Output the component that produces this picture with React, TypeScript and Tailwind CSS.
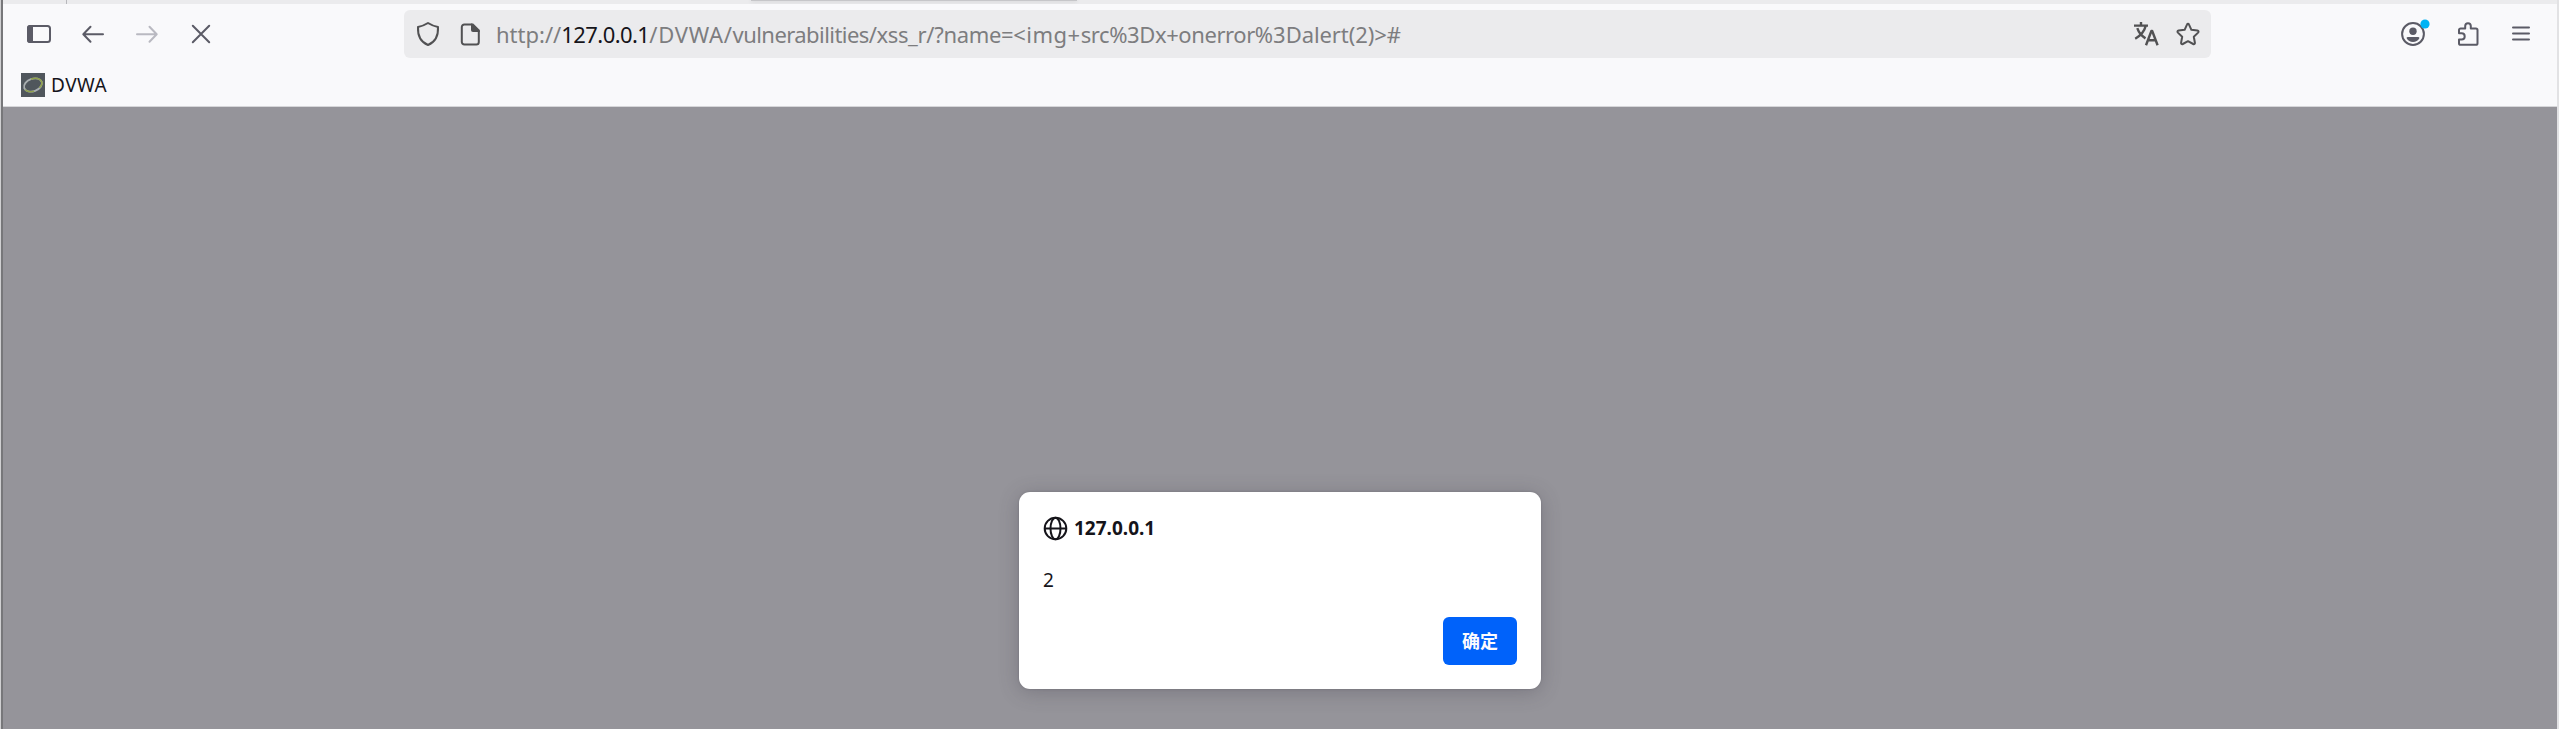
import type { ReactNode } from "react";

function Icon({ children, className = "" }: { children: ReactNode; className?: string }) {
  return (
    <svg
      viewBox="0 0 24 24"
      className={`size-6 shrink-0 overflow-visible ${className}`}
      fill="none"
      stroke="currentColor"
      strokeWidth="2"
      strokeLinecap="round"
      strokeLinejoin="round"
    >
      {children}
    </svg>
  );
}

function Toolbar() {
  return (
    <div className="flex h-[60px] shrink-0 items-center pl-6 text-[#5b5b66]">
      <div className="flex w-[377px] items-center">
        <Icon>
          <rect x="1" y="4" width="22" height="16" rx="2.5" />
          <path d="M3 3h3v18H3a3 3 0 0 1-3-3V6a3 3 0 0 1 3-3z" fill="currentColor" stroke="none" />
        </Icon>
        <Icon className="ml-[31px]">
          <path d="M21 12.3H2M8.5 4.8 1.3 12.3l7.2 7.5" />
        </Icon>
        <Icon className="ml-[30px] text-[#b9b9c1]">
          <path d="M1 12.3H20M13.5 4.8l7.2 7.5-7.2 7.5" />
        </Icon>
        <Icon className="ml-[29px]">
          <path d="M3.8 3.8l16.4 16.4M20.2 3.8 3.8 20.2" />
        </Icon>
      </div>
      <div className="flex h-12 w-[1807px] items-center rounded-[6px] bg-[#ebebed] pl-3 pr-[11px] text-[#515153]">
        <Icon>
          <path d="M12 1 C9.3 2.7 5.5 4.3 2 5 C1.6 13 4.5 20 12 23 C19.5 20 22.4 13 22 5 C18.5 4.3 14.7 2.7 12 1z" />
        </Icon>
        <Icon className="ml-[18px]">
          <path d="M13.5 2.5H6.3A2.5 2.5 0 0 0 3.8 5v15a2.5 2.5 0 0 0 2.5 2.5h12A2.5 2.5 0 0 0 20.8 20V9.5z" />
          <path d="M13 1.5h2.2l6.6 6.6v2H15a2 2 0 0 1-2-2z" fill="currentColor" stroke="none" />
        </Icon>
        <div className="ml-[14px] h-[30px] whitespace-pre text-[22px] leading-[30px] text-[#7d7d7f]">
          <span>http://</span>
          <span className="tracking-[-0.57px] text-[#15141a]">127.0.0.1</span>
          <span className="tracking-[0.7px]">/DVWA/</span>
          <span className="tracking-[-0.56px]">vulnerabilities/</span>
          <span className="tracking-[-0.33px]">xss_r/?name=</span>
          <span className="tracking-[0.5px]">&lt;img+</span>
          <span className="tracking-[-0.4px]">src%3Dx</span>
          <span className="tracking-[-0.43px]">+onerror</span>
          <span>%3D</span>
          <span className="tracking-[-0.1px]">alert(2)&gt;#</span>
        </div>
        <Icon className="ml-auto">
          <path
            d="M0 3.6h14M7 0v3.6M11.8 3.6C10.5 9.3 6.5 13.8 1.2 16.7M3.3 6.2c1.5 4.5 4.2 7.8 8.2 10.2M12 23.2l5.4-14.2h.8l5.4 14.2M13.8 18.3h8"
            strokeLinecap="butt"
            strokeWidth="2.4"
          />
        </Icon>
        <Icon className="ml-[18px]">
          <path d="M12 1.8a1 1 0 0 1 .9.6l2.5 5.4 6 .8c1.2.2 1.5 1.2.7 2l-4.3 4.1 1.1 6c.2 1.2-.7 1.8-1.7 1.3L12 19.2 6.8 22c-1 .5-1.9-.1-1.7-1.3l1.1-6-4.3-4.1c-.8-.8-.5-1.8.7-2l6-.8 2.5-5.4a1 1 0 0 1 .9-.6z" />
        </Icon>
      </div>
      <div className="ml-auto mr-6 flex items-center">
        <Icon>
          <circle cx="12" cy="12" r="10.9" />
          <circle cx="12" cy="9.3" r="3.7" fill="currentColor" stroke="none" />
          <path d="M6.8 15h10.4c1 0 1.5.8 1 1.6-1.2 2-3.4 3.4-6.2 3.4s-5-1.4-6.2-3.4c-.5-.8 0-1.6 1-1.6z" fill="currentColor" stroke="none" />
          <circle cx="24" cy="2" r="4.6" fill="#00b3f4" stroke="none" />
        </Icon>
        <Icon className="ml-[31px]">
          <path d="M3 9V8a1.6 1.6 0 0 1 1.6-1.6h4.6V4a2.8 2.8 0 0 1 5.6 0v2.4h5.1A1.6 1.6 0 0 1 21.5 8v13.2a1.6 1.6 0 0 1-1.6 1.6H4.6A1.6 1.6 0 0 1 3 21.2v-3.7h2.6a3.1 3.1 0 0 0 0-6.2H3z" />
        </Icon>
        <Icon className="ml-[29px]">
          <path d="M4 5.5h16M4 11.5h16M4 17.5h16" />
        </Icon>
      </div>
    </div>
  );
}

function BookmarksBar() {
  return (
    <div className="flex h-[43px] shrink-0 items-center border-b border-[#d6d6d9] pl-[18px]">
      <svg viewBox="0 0 24 24" className="size-6 shrink-0" fill="none">
        <rect width="24" height="24" fill="#50565c" />
        <g transform="rotate(-20 12 12)">
          <ellipse cx="12" cy="12" rx="9.3" ry="6.2" stroke="#a9aeb0" strokeWidth="1.8" />
          <path d="M12 5.8c5 0 9 2.4 9.3 6 .1 2-1.6 3.8-4.2 5" stroke="#8fa04d" strokeWidth="1.6" />
          <path d="M3 13.8c1.2 2.6 4.4 4.2 8 4.4" stroke="#8fa04d" strokeWidth="1.4" />
        </g>
      </svg>
      <span className="ml-[6px] text-[19px] leading-6 tracking-[0.5px] text-[#15141a]">DVWA</span>
    </div>
  );
}

function AlertDialog() {
  return (
    <div className="flex h-[197px] w-[522px] flex-col rounded-[11px] bg-white px-6 pt-6 text-[#15141a] shadow-[0_3px_20px_rgba(58,57,68,0.3),0_0_2px_rgba(58,57,68,0.3)]">
      <div className="flex h-6 items-center">
        <Icon>
          <circle cx="12.5" cy="12.5" r="10.8" />
          <ellipse cx="12.5" cy="12.5" rx="5" ry="10.8" />
          <path d="M2 12.5h21" />
        </Icon>
        <span className="ml-[7px] text-[19px] font-bold leading-6">127.0.0.1</span>
      </div>
      <div className="mt-7 h-6 text-[19px] leading-6">2</div>
      <button className="ml-auto mt-[25px] h-12 w-[74px] rounded-[6px] bg-[#0062fa] text-[18px] font-bold leading-6 text-[#fbfbfe]">
        确定
      </button>
    </div>
  );
}

export default function App() {
  return (
    <div className="flex h-[729px] w-[2559px] overflow-hidden border-r-2 border-[#e2e2e4] bg-[#f9f9fb] font-['Noto_Sans','Noto_Sans_CJK_SC',sans-serif]">
      <div className="w-[3px] shrink-0 border-r-2 border-[#77777a] bg-[#d0d0d2]" />
      <div className="flex min-w-0 grow flex-col">
        <div className="flex h-1 shrink-0 overflow-hidden bg-[#ebebed]">
          <div className="w-16 border-r border-[#b8b8bc]" />
          <div className="ml-[684px] h-px w-[326px] bg-[#c6c6c9] shadow-[0_0_4px_rgba(0,0,0,0.25)]" />
        </div>
        <Toolbar />
        <BookmarksBar />
        <main className="flex grow items-start justify-center bg-[#95949a] pt-[385px]">
          <AlertDialog />
        </main>
      </div>
    </div>
  );
}
